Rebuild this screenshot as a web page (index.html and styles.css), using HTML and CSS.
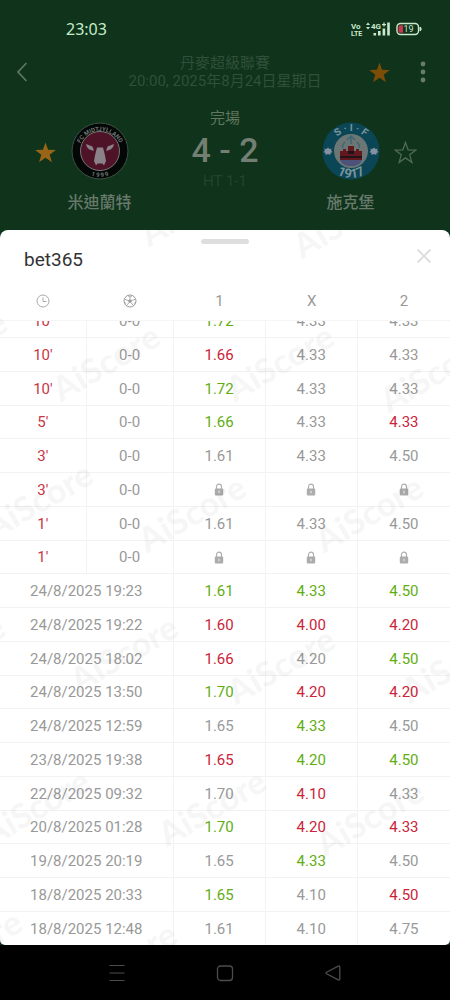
FILE: index.html
```html
<!DOCTYPE html>
<html lang="zh-Hant">
<head>
<meta charset="utf-8">
<meta name="viewport" content="width=device-width, initial-scale=1">
<title>bet365</title>
<link rel="stylesheet" href="styles.css">
</head>
<body>
<svg class="defs" aria-hidden="true">
  <symbol id="lock" viewBox="0 0 10 13">
    <path d="M2.500 6V3.600a2.500 2.500 0 0 1 5 0V6" fill="none" stroke="#b0b0b0" stroke-width="1.200"/>
    <rect x="0.800" y="5.400" width="8.400" height="7" rx="1" fill="#acacac"/>
    <path d="M5 7.800v2.400" stroke="#e4e4e4" stroke-width="1.200"/>
  </symbol>
  <symbol id="star" viewBox="0 0 24 24">
    <path d="M12 1.500l2.700 7.700 8.100.2-6.400 5 2.300 7.900L12 17.600l-6.700 4.700 2.300-7.900-6.400-5 8.100-.2z"/>
  </symbol>
</svg>
<main class="screen">
  <header class="match">
    <div class="status">
      <span class="clock">23:03</span>
      <svg class="signals" width="74" height="16" viewBox="0 0 74 16" aria-hidden="true">
        <g fill="#c9e8cc" font-family="Roboto, sans-serif" font-weight="700">
          <text x="1" y="8" font-size="8">Vo</text>
          <text x="1" y="15" font-size="7">LTE</text>
          <text x="21" y="8" font-size="8">4G</text>
          <path d="M16 4l2-2.400L20 4zM16 6l2 2.400L20 6z"/>
          <path d="M32 3h4v1.200h-4zM33.400 1.600h1.200v4h-1.200z"/>
          <path d="M23.500 12h2.600v2.500h-2.600zM28 10h2.600v4.500H28zM32.600 7.500h2.600v7h-2.600zM37.200 1.500h2.600v13h-2.600z"/>
        </g>
        <rect x="47" y="2.500" width="21.500" height="11" rx="3.500" fill="none" stroke="#c9e8cc" stroke-width="1.400"/>
        <path d="M50 4.200h3v7.600h-3a1.500 1.500 0 0 1-1.500-1.500V5.700A1.500 1.500 0 0 1 50 4.200z" fill="#c8374a"/>
        <path d="M70 6c1.500.2 1.500 3.800 0 4z" fill="#c9e8cc" stroke="#c9e8cc"/>
        <text x="58.500" y="11.200" font-size="9" font-family="Roboto, sans-serif" text-anchor="middle" fill="#c9e8cc">19</text>
      </svg>
    </div>
    <div class="bar">
      <button class="icon-button" aria-label="返回">
        <svg width="14" height="22" viewBox="0 0 14 22"><path d="M11.500 2L3 11l8.500 9" fill="none" stroke="#5d7562" stroke-width="1.800"/></svg>
      </button>
      <div class="league">
        <p>丹麥超級聯賽</p>
        <p>20:00, 2025年8月24日星期日</p>
      </div>
      <button class="icon-button" aria-label="收藏"><svg class="star-dim" width="23" height="23"><use href="#star"/></svg></button>
      <button class="icon-button" aria-label="更多">
        <svg width="6" height="24" viewBox="0 0 6 24" fill="#6a7b6d"><circle cx="3" cy="4" r="2.400"/><circle cx="3" cy="12" r="2.400"/><circle cx="3" cy="20" r="2.400"/></svg>
      </button>
    </div>
    <section class="teams">
      <button class="icon-button favourite" aria-label="收藏米迪蘭特"><svg class="star-on" width="23" height="23"><use href="#star"/></svg></button>
      <div class="team">
        <svg width="58" height="58" viewBox="0 0 58 58" aria-hidden="true">
          <defs>
            <path id="fcm-top" d="M7 31a22 22 0 0 1 44 0"/>
            <path id="fcm-bottom" d="M3 29a26 26 0 0 0 52 0"/>
          </defs>
          <circle cx="29" cy="29" r="28" fill="#030706" stroke="#3e5144"/>
          <circle cx="29" cy="29" r="19.500" fill="#4f1328" stroke="#777" stroke-width="1"/>
          <path d="M15 22l6.500 2.500 1.500 4.500-4.500-1.500c-2-1-3-3-3.500-5.500zM43 22l-6.500 2.500-1.500 4.500 4.500-1.500c2-1 3-3 3.500-5.500z" fill="#8b8188"/>
          <path d="M26 25.500h6l2 8 1 5.500-2 4.500-1.500-2h-5l-1.500 2-2-4.500 1-5.500z" fill="#8b8188"/>
          <g fill="#6f7370" font-family="Roboto, sans-serif" font-weight="700" text-anchor="middle">
            <text font-size="6"><textPath href="#fcm-top" startOffset="50%">FC MIDTJYLLAND</textPath></text>
            <text font-size="6"><textPath href="#fcm-bottom" startOffset="50%">1 9 9 9</textPath></text>
          </g>
        </svg>
        <h2>米迪蘭特</h2>
      </div>
      <div class="score">
        <p class="state">完場</p>
        <p class="goals">4 - 2</p>
        <p class="half">HT 1-1</p>
      </div>
      <div class="team">
        <svg width="58" height="58" viewBox="0 0 58 58" aria-hidden="true">
          <defs>
            <path id="sif-top" d="M9 29a20 20 0 0 1 40 0"/>
            <path id="sif-bottom" d="M2 29a27 27 0 0 0 54 0"/>
          </defs>
          <circle cx="29" cy="29" r="28.500" fill="#0b4656"/>
          <circle cx="29" cy="29" r="17" fill="#6c7775"/>
          <path d="M23 20c-2 2-3 4-2 6M29 14v8M35 20c2 2 3 4 2 6M25 18l4-4 4 4" fill="none" stroke="#3b6872" stroke-width="1.500"/>
          <path d="M18 29h3v-2h3v2h2v-5h6v5h2v-2h3v2h3v9H18z" fill="#631820"/>
          <path d="M26 29h6v3h-6zM18 34h22v2H18z" fill="#211519"/>
          <path d="M18 38h22c-2 4-5 6-11 6s-9-2-11-6z" fill="#4c5279"/>
          <g fill="#8591a0">
            <path id="blossom" d="M6 25.500l1.500 1.500 2-.3-.4 2L10.500 30l-1.900 1-.3 2L6 32l-2.300 1-.3-2-1.900-1 1.400-1.300-.4-2 2 .3z"/>
            <use href="#blossom" x="46"/>
          </g>
          <g fill="#7a9499" font-family="Roboto, sans-serif" font-weight="700" text-anchor="middle">
            <text font-size="10"><textPath href="#sif-top" startOffset="50%">S · I · F</textPath></text>
            <text font-size="13"><textPath href="#sif-bottom" startOffset="50%">1917</textPath></text>
          </g>
        </svg>
        <h2>施克堡</h2>
      </div>
      <button class="icon-button favourite" aria-label="收藏施克堡"><svg class="star-off" width="23" height="23"><use href="#star"/></svg></button>
    </section>
  </header>

  <section class="sheet">
    <div class="handle"></div>
    <div class="sheet-head">
      <h1>bet365</h1>
      <button class="icon-button" aria-label="關閉">
        <svg width="16" height="16" viewBox="0 0 16 16"><path d="M1.500 1.500l13 13M14.500 1.500l-13 13" stroke="#ddd" stroke-width="1.800"/></svg>
      </button>
    </div>
    <div class="scroller">
      <table class="odds">
        <colgroup><col class="c-time"><col class="c-goals"><col class="c-odd"><col class="c-odd"><col class="c-odd"></colgroup>
        <thead>
          <tr>
            <th scope="col" aria-label="時間"><svg width="14" height="14" viewBox="0 0 14 14" fill="none" stroke="#aaa"><circle cx="7" cy="7" r="6"/><path d="M7 3.500V7.500h3.500"/></svg></th>
            <th scope="col" aria-label="比分"><svg width="14" height="14" viewBox="0 0 14 14" fill="none" stroke="#999"><circle cx="7" cy="7" r="6"/><path d="M7 5l2 1.500-.8 2.300H5.800L5 6.500z" fill="#999" stroke="none"/><path d="M7 5V2.800M9 6.500l3-1.200M8.200 8.800l2 2.800M5.800 8.800l-2 2.800M5 6.500L2 5.300M4.500 1.500L7 3l2.500-1.500M1.200 8.500l2 1M12.800 8.500l-2 1" stroke-width=".8"/></svg></th>
            <th scope="col">1</th><th scope="col">X</th><th scope="col">2</th>
          </tr>
        </thead>
        <tbody>
          <tr><td class="live">10'</td><td>0-0</td><td class="up">1.72</td><td>4.33</td><td>4.33</td></tr>
          <tr><td class="live">10'</td><td>0-0</td><td class="down">1.66</td><td>4.33</td><td>4.33</td></tr>
          <tr><td class="live">10'</td><td>0-0</td><td class="up">1.72</td><td>4.33</td><td>4.33</td></tr>
          <tr><td class="live">5'</td><td>0-0</td><td class="up">1.66</td><td>4.33</td><td class="down">4.33</td></tr>
          <tr><td class="live">3'</td><td>0-0</td><td>1.61</td><td>4.33</td><td>4.50</td></tr>
          <tr><td class="live">3'</td><td>0-0</td><td><svg class="lock"><use href="#lock"/></svg></td><td><svg class="lock"><use href="#lock"/></svg></td><td><svg class="lock"><use href="#lock"/></svg></td></tr>
          <tr><td class="live">1'</td><td>0-0</td><td>1.61</td><td>4.33</td><td>4.50</td></tr>
          <tr><td class="live">1'</td><td>0-0</td><td><svg class="lock"><use href="#lock"/></svg></td><td><svg class="lock"><use href="#lock"/></svg></td><td><svg class="lock"><use href="#lock"/></svg></td></tr>
          <tr><td colspan="2">24/8/2025 19:23</td><td class="up">1.61</td><td class="up">4.33</td><td class="up">4.50</td></tr>
          <tr><td colspan="2">24/8/2025 19:22</td><td class="down">1.60</td><td class="down">4.00</td><td class="down">4.20</td></tr>
          <tr><td colspan="2">24/8/2025 18:02</td><td class="down">1.66</td><td>4.20</td><td class="up">4.50</td></tr>
          <tr><td colspan="2">24/8/2025 13:50</td><td class="up">1.70</td><td class="down">4.20</td><td class="down">4.20</td></tr>
          <tr><td colspan="2">24/8/2025 12:59</td><td>1.65</td><td class="up">4.33</td><td>4.50</td></tr>
          <tr><td colspan="2">23/8/2025 19:38</td><td class="down">1.65</td><td class="up">4.20</td><td class="up">4.50</td></tr>
          <tr><td colspan="2">22/8/2025 09:32</td><td>1.70</td><td class="down">4.10</td><td>4.33</td></tr>
          <tr><td colspan="2">20/8/2025 01:28</td><td class="up">1.70</td><td class="down">4.20</td><td class="down">4.33</td></tr>
          <tr><td colspan="2">19/8/2025 20:19</td><td>1.65</td><td class="up">4.33</td><td>4.50</td></tr>
          <tr><td colspan="2">18/8/2025 20:33</td><td class="up">1.65</td><td>4.10</td><td class="down">4.50</td></tr>
          <tr><td colspan="2">18/8/2025 12:48</td><td>1.61</td><td>4.10</td><td>4.75</td></tr>
        </tbody>
      </table>
    </div>
    <svg class="watermark" aria-hidden="true">
      <g text-anchor="middle">
        <text transform="translate(200 -12) rotate(-30)">AiScore</text>
        <text transform="translate(353 0) rotate(-30)">AiScore</text>
        <text transform="translate(-41 129) rotate(-30)">AiScore</text>
        <text transform="translate(112 143) rotate(-30)">AiScore</text>
        <text transform="translate(286 143) rotate(-30)">AiScore</text>
        <text transform="translate(440 154) rotate(-30)">AiScore</text>
        <text transform="translate(45 281) rotate(-30)">AiScore</text>
        <text transform="translate(198 294) rotate(-30)">AiScore</text>
        <text transform="translate(375 294) rotate(-30)">AiScore</text>
        <text transform="translate(-43 434) rotate(-30)">AiScore</text>
        <text transform="translate(130 434) rotate(-30)">AiScore</text>
        <text transform="translate(287 446) rotate(-30)">AiScore</text>
        <text transform="translate(461 445) rotate(-30)">AiScore</text>
        <text transform="translate(42 588) rotate(-30)">AiScore</text>
        <text transform="translate(218 588) rotate(-30)">AiScore</text>
        <text transform="translate(376 598) rotate(-30)">AiScore</text>
        <text transform="translate(-26 729) rotate(-30)">AiScore</text>
        <text transform="translate(129 741) rotate(-30)">AiScore</text>
      </g>
    </svg>
  </section>
</main>
<nav class="system">
  <button class="icon-button" aria-label="最近使用"><svg width="18" height="18" viewBox="0 0 18 18"><path d="M1.500 1.500h15M1.500 9h15M1.500 16.500h15" stroke="#4c4c4c" stroke-width="1.200"/></svg></button>
  <button class="icon-button" aria-label="主畫面"><svg width="18" height="18" viewBox="0 0 18 18"><rect x="1.500" y="2" width="15" height="14.500" rx="3" fill="none" stroke="#4c4c4c" stroke-width="1.300"/></svg></button>
  <button class="icon-button" aria-label="返回上一頁"><svg width="18" height="18" viewBox="0 0 18 18"><path d="M15.800 3v12c0 1-.8 1.300-1.600.8L2.600 9.800c-.8-.5-.8-1.100 0-1.600L14.200 2.200c.8-.5 1.600-.2 1.600.8z" fill="none" stroke="#4c4c4c" stroke-width="1.300"/></svg></button>
</nav>
</body>
</html>
```

FILE: styles.css
```css
* {
  box-sizing: border-box;
}

body {
  display: flex;
  flex-direction: column;
  height: 100vh;
  margin: 0;
  background: #000;
  color: #999;
  font-family: Roboto, "Noto Sans CJK TC", sans-serif;
  font-size: 15px;
}

p, h1, h2 {
  margin: 0;
}

.defs {
  display: none;
}

.icon-button {
  display: flex;
  align-items: center;
  justify-content: center;
  margin: 0;
  padding: 0;
  border: 0;
  background: none;
}

.screen {
  display: flex;
  flex: 1;
  flex-direction: column;
  min-height: 0;
  background: #0f331b;
}

/* Match header */
.status {
  display: flex;
  align-items: center;
  justify-content: space-between;
  height: 54px;
  padding: 4px 26px 0 66px;
}

.clock {
  color: #c6ecc9;
  font-family: "Noto Sans", sans-serif;
  font-size: 16px;
}

.bar {
  display: grid;
  grid-template-columns: 43px 1fr 43px 43px;
  align-items: center;
  padding-right: 6px;
}

.league {
  padding-left: 49px;
  color: #30503a;
  line-height: 18px;
  text-align: center;
  white-space: nowrap;
}

.star-dim {
  fill: #7c4d08;
}

.star-on {
  fill: #976515;
}

.star-off {
  fill: none;
  stroke: #526b57;
  stroke-width: 1.3px;
}

.teams {
  display: grid;
  grid-template-columns: 24px 85px 1fr 85px 24px;
  padding: 18px 33px 17px;
}

.favourite {
  align-self: start;
  margin-top: 33px;
}

.team {
  display: flex;
  flex-direction: column;
  align-items: center;
  gap: 13px;
  padding-top: 14px;
}

.team h2 {
  color: #687a6b;
  font-size: 16px;
  font-weight: 500;
  line-height: 20px;
}

.score {
  text-align: center;
}

.state {
  color: #62775f;
  line-height: 20px;
}

.goals {
  padding: 2px 0;
  color: #737f73;
  font-size: 34px;
  font-weight: 500;
  line-height: 40px;
}

.half {
  color: #23452d;
  line-height: 18px;
}

/* Odds sheet */
.sheet {
  position: relative;
  display: flex;
  flex: 1;
  flex-direction: column;
  min-height: 0;
  overflow: hidden;
  border-radius: 8px 8px 5px 5px;
  background: #fff;
}

.handle {
  align-self: center;
  width: 48px;
  height: 5px;
  margin-top: 9px;
  border-radius: 3px;
  background: #dedede;
}

.sheet-head {
  display: flex;
  align-items: flex-start;
  justify-content: space-between;
  padding: 1px 18px 7px 24px;
}

.sheet-head h1 {
  color: #333;
  font-size: 19px;
  font-weight: 400;
  line-height: 30px;
}

.sheet-head .icon-button {
  height: 22px;
}

/* Reversed column keeps the list scrolled to its oldest entry */
.scroller {
  display: flex;
  flex: 1;
  flex-direction: column-reverse;
  min-height: 0;
  overflow-y: auto;
  scrollbar-width: none;
}

.odds {
  flex: none;
  width: 100%;
  border-spacing: 0;
  table-layout: fixed;
  text-align: center;
}

.c-time,
.c-goals {
  width: 19.3%;
}

.c-odd {
  width: 20.5%;
}

.odds th {
  position: sticky;
  top: 0;
  height: 39px;
  padding: 0;
  border-bottom: 1px solid #f5f5f5;
  background: #fff;
  font-weight: 400;
}

.odds th svg {
  display: block;
  margin: 0 auto;
}

.odds td {
  height: 34px;
  padding: 0;
  border-right: 1px solid #f3f3f3;
  border-bottom: 1px solid #f2f2f2;
  line-height: 20px;
}

.odds tr:nth-child(4n) td,
.odds tr:last-child td {
  height: 33px;
}

.odds td:last-child {
  border-right: 0;
}

.odds tr:last-child td {
  border-bottom: 0;
}

.odds .live {
  color: #c93645;
}

.odds .up {
  color: #5fae12;
}

.odds .down {
  color: #cb2439;
}

.lock {
  display: block;
  width: 10px;
  height: 13px;
  margin: 0 auto;
}

.watermark {
  position: absolute;
  inset: 0;
  width: 100%;
  height: 100%;
  fill: rgba(0, 0, 0, 0.035);
  font-family: Lato, sans-serif;
  font-size: 34px;
  font-weight: 900;
  pointer-events: none;
}

/* System navigation */
.system {
  display: flex;
  align-items: center;
  justify-content: center;
  gap: 20%;
  height: 55px;
}
```
